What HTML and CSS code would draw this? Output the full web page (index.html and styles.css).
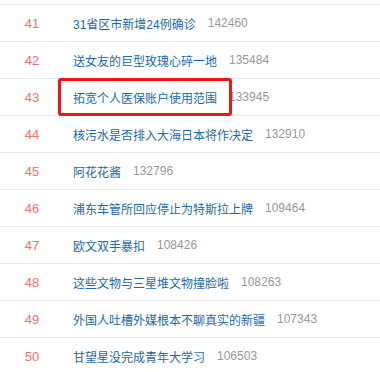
FILE: index.html
```html
<!DOCTYPE html>
<html lang="zh-CN">
<head>
<meta charset="utf-8">
<link rel="stylesheet" href="styles.css">
</head>
<body>
<div class="board">
  <ul class="hot-list">
    <li class="row"><span class="rank">41</span><a class="title">31省区市新增24例确诊</a><span class="count">142460</span></li>
    <li class="row"><span class="rank">42</span><a class="title">送女友的巨型玫瑰心碎一地</a><span class="count">135484</span></li>
    <li class="row"><span class="rank">43</span><a class="title">拓宽个人医保账户使用范围</a><span class="count">133945</span></li>
    <li class="row"><span class="rank">44</span><a class="title">核污水是否排入大海日本将作决定</a><span class="count">132910</span></li>
    <li class="row"><span class="rank">45</span><a class="title">阿花花酱</a><span class="count">132796</span></li>
    <li class="row"><span class="rank">46</span><a class="title">浦东车管所回应停止为特斯拉上牌</a><span class="count">109464</span></li>
    <li class="row"><span class="rank">47</span><a class="title">欧文双手暴扣</a><span class="count">108426</span></li>
    <li class="row"><span class="rank">48</span><a class="title">这些文物与三星堆文物撞脸啦</a><span class="count">108263</span></li>
    <li class="row"><span class="rank">49</span><a class="title">外国人吐槽外媒根本不聊真实的新疆</a><span class="count">107343</span></li>
    <li class="row"><span class="rank">50</span><a class="title">甘望星没完成青年大学习</a><span class="count">106503</span></li>
  </ul>
  <div class="highlight"></div>
</div>
</body>
</html>
```

FILE: styles.css
```css
html, body {
  margin: 0;
  padding: 0;
  background: #fff;
}
body {
  font-family: "Liberation Sans", "Noto Sans CJK SC", sans-serif;
  font-size: 12px;
  overflow: hidden;
}
.board {
  position: relative;
  padding-top: 4px;
}
.hot-list {
  list-style: none;
  margin: 0;
  padding: 0;
  border-top: 1px solid #ebebeb;
}
.row {
  display: flex;
  align-items: center;
  height: 36px;
  border-bottom: 1px solid #ebebeb;
}
.rank {
  width: 64px;
  text-align: center;
  font-size: 13px;
  color: #f46f6f;
}
.title {
  margin-left: 9px;
  color: #1a69b0;
  text-decoration: none;
}
.count {
  margin-left: 12px;
  color: #999;
}
.highlight {
  position: absolute;
  left: 58px;
  top: 78px;
  width: 168px;
  height: 32px;
  border: 3px solid #f31414;
  border-radius: 3px;
}
```
